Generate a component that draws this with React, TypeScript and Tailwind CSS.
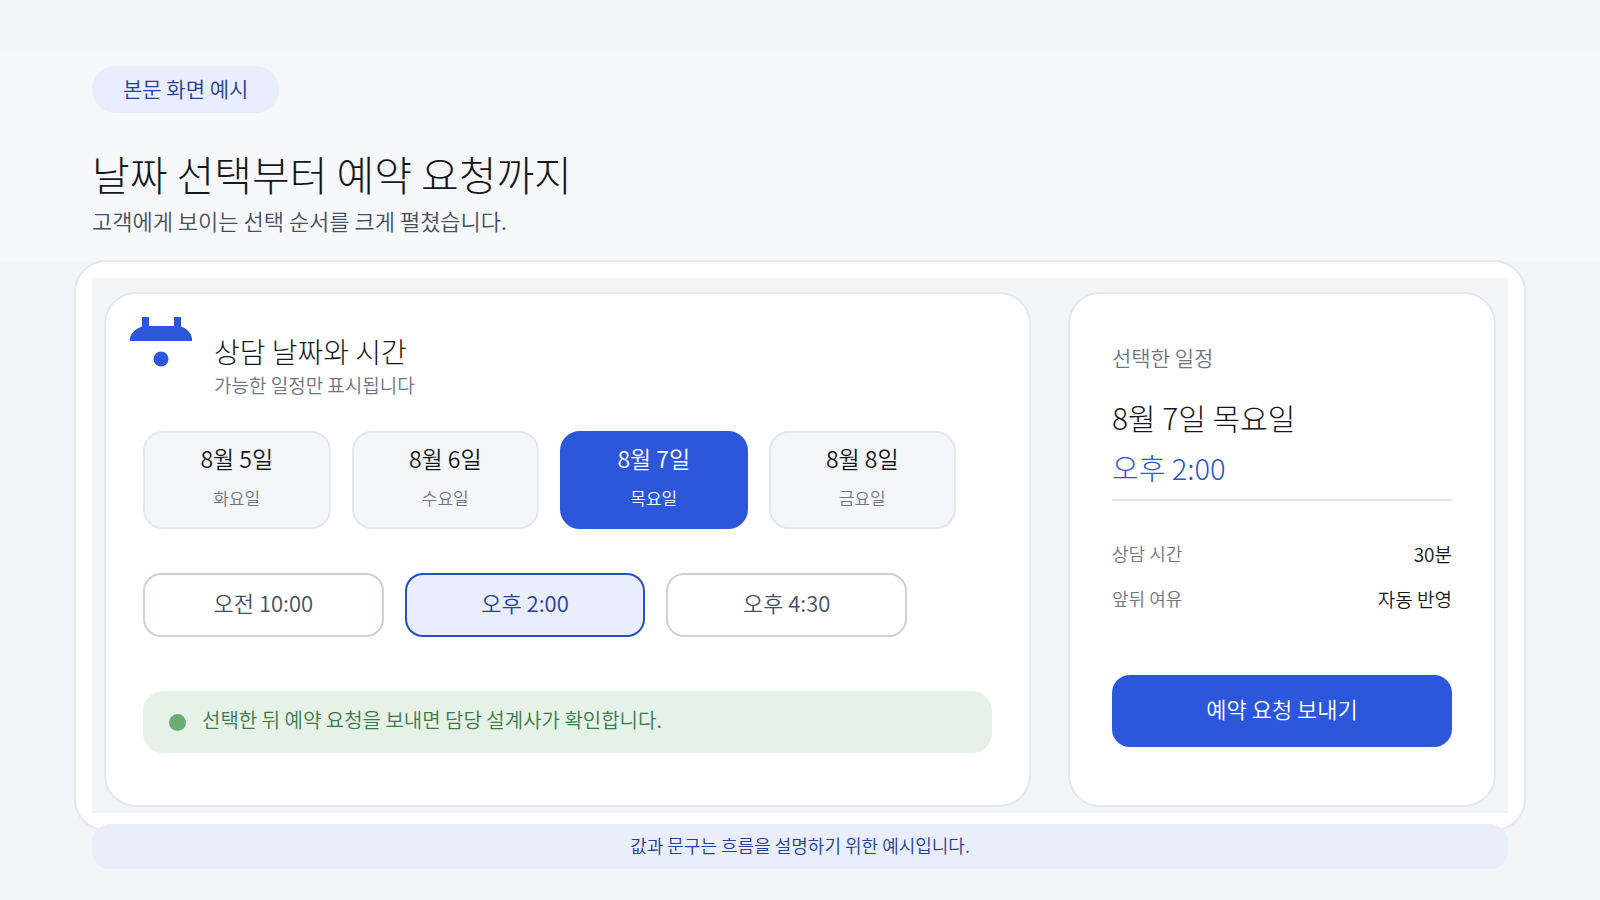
import { useState } from "react";

const dates = [
  { date: "8월 5일", day: "화요일" },
  { date: "8월 6일", day: "수요일" },
  { date: "8월 7일", day: "목요일" },
  { date: "8월 8일", day: "금요일" },
];

const times = ["오전 10:00", "오후 2:00", "오후 4:30"];

function CalendarMark() {
  return (
    <svg
      width="62"
      height="50"
      viewBox="0 0 62 50"
      fill="#2d57db"
      className="shrink-0"
      aria-hidden="true"
    >
      <path d="M12 0h7v9h25V0h7v9.500c6 2 11 7 11 12.500v2H0v-2C0 16.500 6 11.500 12 9.500z" />
      <circle cx="31" cy="42" r="7.5" />
    </svg>
  );
}

function DateButton({
  date,
  day,
  selected,
  onClick,
}: {
  date: string;
  day: string;
  selected: boolean;
  onClick: () => void;
}) {
  return (
    <button
      type="button"
      aria-pressed={selected}
      onClick={onClick}
      className={`flex h-[98px] flex-col items-center gap-3 rounded-[20px] border-2 pt-[9px] ${
        selected
          ? "border-[#2d57db] bg-[#2d57db] text-white"
          : "border-[#e5e7ec] bg-[#f4f6fa] text-[#14161c]"
      }`}
    >
      <span className="text-[23px] leading-8">{date}</span>
      <span
        className={`text-[17px] leading-6 ${selected ? "text-white" : "text-[#6f7683]"}`}
      >
        {day}
      </span>
    </button>
  );
}

function TimeButton({
  label,
  selected,
  onClick,
}: {
  label: string;
  selected: boolean;
  onClick: () => void;
}) {
  return (
    <button
      type="button"
      aria-pressed={selected}
      onClick={onClick}
      className={`h-16 rounded-[18px] border-2 pb-1.5 text-[22px] leading-8 ${
        selected
          ? "border-[#2450c0] bg-[#e9edfd] text-[#23409c]"
          : "border-[#cdd1d8] bg-white text-[#465062]"
      }`}
    >
      {label}
    </button>
  );
}

export default function App() {
  const [dateIndex, setDateIndex] = useState(2);
  const [timeIndex, setTimeIndex] = useState(1);

  return (
    <main className="min-h-screen bg-[#f3f5f9] bg-[linear-gradient(#f3f5f9_52px,#f5f7fa_52px,#f6f8fa_262px,#f3f5f9_262px)] px-[74px] pt-[66px] pb-[31px] font-['Noto_Sans_CJK_KR',sans-serif] font-[350] text-[#14161c]">
      <header className="px-[18px]">
        <p className="inline-flex h-[47px] items-center rounded-full bg-[#e9edfd] px-[31px] pb-1 text-[21px] leading-8 text-[#23409c]">
          본문 화면 예시
        </p>
        <h1 className="mt-[30px] text-[41px] leading-[60px] font-light">날짜 선택부터 예약 요청까지</h1>
        <p className="mt-px text-[22px] leading-8 text-[#465062]">
          고객에게 보이는 선택 순서를 크게 펼쳤습니다.
        </p>
      </header>

      <div className="mt-6 rounded-[32px] border-2 border-[#e5e7ec] bg-white p-4">
        <div className="grid grid-cols-[927fr_428fr] gap-[37px] bg-[#f2f4f8] px-3 pt-3.5 pb-1.5">
          <section className="rounded-[32px] border-2 border-[#e5e7ec] bg-white px-[37px] pb-[52px]">
            <div className="-ml-[13px] flex items-start gap-[22px] pt-[23px]">
              <CalendarMark />
              <div className="pt-3.5">
                <h2 className="text-[28px] leading-10 font-light">상담 날짜와 시간</h2>
                <p className="text-[19px] leading-7 text-[#6f7683]">가능한 일정만 표시됩니다</p>
              </div>
            </div>

            <div className="mt-8 mr-9 grid grid-cols-4 gap-[21px]">
              {dates.map((d, i) => (
                <DateButton
                  key={d.date}
                  date={d.date}
                  day={d.day}
                  selected={i === dateIndex}
                  onClick={() => setDateIndex(i)}
                />
              ))}
            </div>

            <div className="mt-11 mr-[85px] grid grid-cols-3 gap-[21px]">
              {times.map((t, i) => (
                <TimeButton
                  key={t}
                  label={t}
                  selected={i === timeIndex}
                  onClick={() => setTimeIndex(i)}
                />
              ))}
            </div>

            <div className="mt-[54px] flex h-[62px] items-center gap-4 rounded-[20px] bg-[#e6f1e8] pl-[26px] text-[20px] leading-8 text-[#3d7a4b]">
              <span className="size-[17px] shrink-0 rounded-full bg-[#6aad74]" />
              <p className="pb-1">선택한 뒤 예약 요청을 보내면 담당 설계사가 확인합니다.</p>
            </div>
          </section>

          <aside className="rounded-[32px] border-2 border-[#e5e7ec] bg-white px-[42px] pt-[47px]">
            <h2 className="text-[21px] leading-8 text-[#6f7683]">선택한 일정</h2>
            <p className="mt-[18px] text-[30px] leading-[52px] font-light">
              {dates[dateIndex].date} {dates[dateIndex].day}
            </p>
            <p className="pb-2 text-[29px] leading-[48px] font-light text-[#2d57db]">{times[timeIndex]}</p>
            <dl className="border-t-2 border-[#e3e5ea] pt-[30px]">
              <div className="flex items-center justify-between leading-[45px]">
                <dt className="text-[18px] text-[#6f7683]">상담 시간</dt>
                <dd className="text-[19px]">30분</dd>
              </div>
              <div className="flex items-center justify-between leading-[45px]">
                <dt className="text-[18px] text-[#6f7683]">앞뒤 여유</dt>
                <dd className="text-[19px]">자동 반영</dd>
              </div>
            </dl>
            <button
              type="button"
              className="mt-[54px] h-[72px] w-full rounded-[18px] bg-[#2d57db] pb-1.5 text-[22px] leading-8 text-white"
            >
              예약 요청 보내기
            </button>
          </aside>
        </div>
      </div>

      <footer className="relative mx-[18px] -mt-[7px] flex h-[45px] items-center justify-center rounded-[18px] bg-[#e9edfc] pb-1 text-[18px] leading-7 text-[#23409c]">
        값과 문구는 흐름을 설명하기 위한 예시입니다.
      </footer>
    </main>
  );
}
